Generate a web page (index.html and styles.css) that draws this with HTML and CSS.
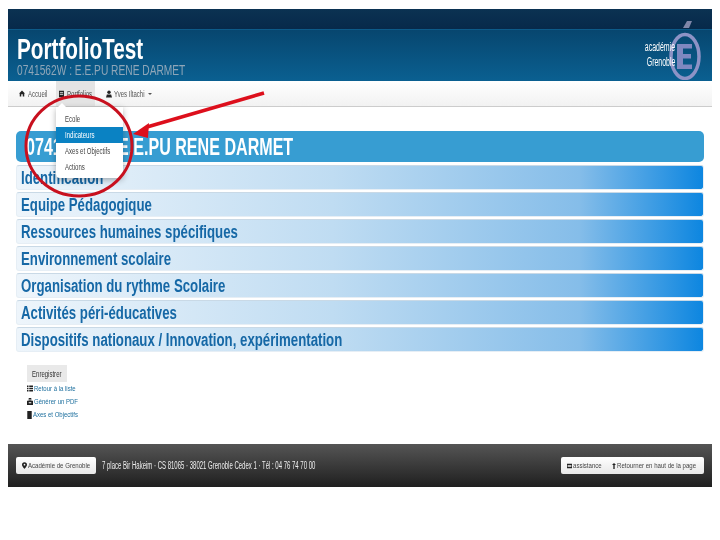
FILE: index.html
```html
<!DOCTYPE html>
<html lang="fr">
<head>
<meta charset="utf-8">
<title>PortfolioTest</title>
<link rel="stylesheet" href="styles.css">
</head>
<body>
<div class="page">
  <div class="topbar"></div>
  <header class="header">
    <div class="brand">
      <div class="brand-title"><span class="squeeze sq-title">PortfolioTest</span></div>
      <div class="brand-sub"><span class="squeeze sq-sub">0741562W : E.E.PU RENE DARMET</span></div>
    </div>
    <div class="logo">
      <div class="logo-text"><span class="squeeze-r">académie</span><span class="squeeze-r">Grenoble</span></div>
      <svg class="logo-mark" width="32" height="62" viewBox="0 0 32 62">
        <polygon points="14,10 18,3 23,3 20,10" fill="#7f86a8"/>
        <ellipse cx="16" cy="38.500" rx="14" ry="22" fill="none" stroke="#8d93c6" stroke-width="3.500"/>
        <path d="M8 26H23V30.500H14V36H22V40.500H14V46.500H23V51H8Z" fill="#7f88c0"/>
      </svg>
    </div>
  </header>
  <nav class="nav">
    <a class="nav-item nav-home">
      <svg class="ico" width="6" height="7" viewBox="0 0 8 8"><path d="M4 0 8 4H7V8H5V5H3V8H1V4H0Z" fill="#222"/></svg>
      <span class="squeeze sq-nav">Accueil</span>
    </a>
    <a class="nav-item nav-active">
      <svg class="ico" width="5" height="8" viewBox="0 0 6 8"><path d="M0 0H6V8H0ZM1 2V3H5V2ZM1 4V5H5V4Z" fill="#222"/></svg>
      <span class="squeeze sq-nav">Portfolios</span>
    </a>
    <a class="nav-item nav-user">
      <svg class="ico" width="6" height="8" viewBox="0 0 7 8"><circle cx="3.500" cy="2" r="2" fill="#222"/><path d="M0 8 1 4.500H6L7 8Z" fill="#222"/></svg>
      <span class="squeeze sq-nav">Yves Iltachi</span>
      <span class="caret"></span>
    </a>
    <div class="menu">
      <span class="menu-tip"></span>
      <a class="menu-item"><span class="squeeze sq-nav">Ecole</span></a>
      <a class="menu-item menu-on"><span class="squeeze sq-nav">Indicateurs</span></a>
      <a class="menu-item"><span class="squeeze sq-nav">Axes et Objectifs</span></a>
      <a class="menu-item"><span class="squeeze sq-nav">Actions</span></a>
    </div>
  </nav>
  <main class="main">
    <h1 class="title"><span class="squeeze sq-h1">0741562W : E.E.PU RENE DARMET</span></h1>
    <ul class="rows">
      <li class="row"><span class="squeeze sq-row">Identification</span></li>
      <li class="row"><span class="squeeze sq-row">Equipe Pédagogique</span></li>
      <li class="row"><span class="squeeze sq-row">Ressources humaines spécifiques</span></li>
      <li class="row"><span class="squeeze sq-row">Environnement scolaire</span></li>
      <li class="row"><span class="squeeze sq-row">Organisation du rythme Scolaire</span></li>
      <li class="row"><span class="squeeze sq-row">Activités péri-éducatives</span></li>
      <li class="row"><span class="squeeze sq-row">Dispositifs nationaux / Innovation, expérimentation</span></li>
    </ul>
    <div class="actions">
      <button class="save"><span class="squeeze sq-nav">Enregistrer</span></button>
      <a class="link">
        <svg class="ico" width="6" height="7" viewBox="0 0 8 8"><path d="M0 0H2V2H0ZM3 0H8V2H3ZM0 3H2V5H0ZM3 3H8V5H3ZM0 6H2V8H0ZM3 6H8V8H3Z" fill="#222"/></svg>
        <span class="squeeze sq-link">Retour à la liste</span>
      </a>
      <a class="link">
        <svg class="ico" width="6" height="7" viewBox="0 0 7 8"><path d="M2 0H5V3H7V8H0V3H2ZM3 1V3H4V1ZM2 5V6H5V5Z" fill="#222"/></svg>
        <span class="squeeze sq-link">Générer un PDF</span>
      </a>
      <a class="link">
        <svg class="ico" width="5" height="8" viewBox="0 0 5 9"><path d="M0 0H5V9H0Z" fill="#222"/></svg>
        <span class="squeeze sq-link">Axes et Objectifs</span>
      </a>
    </div>
  </main>
  <footer class="footer">
    <a class="foot-btn">
      <svg class="ico" width="5" height="7" viewBox="0 0 6 8"><path fill-rule="evenodd" d="M3 0C5 0 6 1.500 6 3 6 5 3 8 3 8S0 5 0 3C0 1.500 1 0 3 0ZM3 2A1 1 0 1 0 3 4 1 1 0 1 0 3 2Z" fill="#222"/></svg>
      <span class="squeeze sq-foot">Académie de Grenoble</span>
    </a>
    <span class="address"><span class="squeeze sq-addr">7 place Bir Hakeim · CS 81065 · 38021 Grenoble Cedex 1 · Tél : 04 76 74 70 00</span></span>
    <div class="foot-right">
      <svg class="ico" width="5" height="6" viewBox="0 0 8 7"><path d="M0 0H8V7H0ZM1 2V3H7V2ZM1 4V5H7V4Z" fill="#222"/></svg>
      <span class="squeeze sq-foot sq-assist">assistance</span>
      <svg class="ico" width="4" height="8" viewBox="0 0 6 9"><path d="M3 0 6 3H4V9H2V3H0Z" fill="#222"/></svg>
      <span class="squeeze sq-foot">Retourner en haut de la page</span>
    </div>
  </footer>
</div>
<svg class="annot" width="720" height="540" viewBox="0 0 720 540">
  <ellipse cx="79" cy="146" rx="53" ry="50" fill="none" stroke="#c8101e" stroke-width="3"/>
  <path d="M264 93 147 127" stroke="#dd0f1c" stroke-width="3.500" fill="none"/>
  <path d="M133 134 149 123 148 138Z" fill="#dd0f1c"/>
</svg>
</body>
</html>
```
FILE: styles.css
```css
html, body { margin: 0; padding: 0; background: #fff; }
body { font-family: "Liberation Sans", Arial, sans-serif; color: #222; }
.page { position: relative; width: 704px; margin: 9px 8px 0; }
.squeeze { display: inline-block; transform-origin: left center; white-space: nowrap; }
.topbar { height: 20px; background: linear-gradient(#0b3252, #07294a); }
.header { height: 52px; display: flex; justify-content: space-between; background: linear-gradient(#07466f, #0a6091); border-top: 1px solid #0d5a88; box-sizing: border-box; }
.brand { padding: 4px 0 0 9px; }
.brand-title { font-size: 30px; line-height: 29px; font-weight: bold; color: #fff; height: 28px; }
.sq-title { transform: scaleX(.69); }
.brand-sub { font-size: 15px; line-height: 16px; color: #8fa6b8; }
.sq-sub { transform: scaleX(.68); }
.logo { display: flex; align-items: flex-start; height: 52px; padding-right: 11px; }
.logo-text { display: flex; flex-direction: column; align-items: flex-end; padding-top: 10px; margin-right: -6px; color: #fff; font-size: 12px; line-height: 15px; }
.squeeze-r { display: inline-block; transform: scaleX(.58); transform-origin: right center; white-space: nowrap; }
.logo-mark { margin-top: -12px; }
.nav { position: relative; height: 26px; display: flex; background: linear-gradient(#fff, #f2f2f2); border-bottom: 1px solid #ccc; box-sizing: border-box; padding-left: 11px; }
.nav-item { display: flex; align-items: center; gap: 3px; box-sizing: border-box; font-size: 9px; color: #555; }
.nav-home { width: 37px; }
.nav-active { width: 39px; padding-left: 3px; background: #e4e4e4; color: #444; }
.nav-user { padding-left: 11px; gap: 2px; }
.nav-user .squeeze { width: 32px; }
.ico { flex: none; }
.sq-nav { transform: scaleX(.67); filter: blur(.3px); }
.caret { border: 2px solid transparent; border-top-color: #555; border-bottom: 0; }
.menu { position: absolute; left: 48px; top: 26px; width: 67px; background: #fff; border-radius: 0 0 4px 4px; box-shadow: 0 2px 6px rgba(0,0,0,.3); padding: 4px 0 3px; z-index: 2; }
.menu-tip { position: absolute; left: 2px; top: -4px; border: 4px solid transparent; border-top: 0; border-bottom-color: #fff; }
.menu-item { display: block; height: 16px; line-height: 16px; padding-left: 9px; font-size: 9px; color: #444; }
.menu-on { background: #0a82c3; color: #fff; }
.main { padding: 24px 0 0; }
.title { margin: 0 8px 3px; height: 31px; background: #379dd2; border-radius: 5px; font-size: 24px; line-height: 31px; color: #fff; font-weight: bold; padding-left: 10px; }
.sq-h1 { transform: scaleX(.67); }
.rows { list-style: none; margin: 0; padding: 0 8px; display: flex; flex-direction: column; gap: 2px; }
.row { height: 25px; line-height: 25px; box-sizing: border-box; padding-left: 4px; font-size: 18px; font-weight: bold; color: #1668a6; border: 1px solid #e6eef5; border-top-color: #c9d9e6; border-radius: 3px; background: linear-gradient(90deg, #eef5fb 0%, #bfdcf2 46%, #85bde9 82%, #0d86e0 100%); }
.sq-row { transform: scaleX(.735); }
.actions { display: flex; flex-direction: column; align-items: flex-start; padding: 13px 0 0 19px; height: 92px; box-sizing: border-box; }
.save { width: 40px; height: 17px; padding: 0 0 0 5px; border: 0; background: #e9e9e9; font: 9px "Liberation Sans", sans-serif; color: #333; text-align: left; flex: none; }
.link { display: flex; align-items: center; gap: 1px; height: 13px; font-size: 8px; color: #1d6f9e; }
.sq-link { transform: scaleX(.75); filter: blur(.3px); }
.footer { height: 43px; display: flex; align-items: center; padding: 0 8px; background: linear-gradient(#555, #1f1f1f); }
.foot-btn, .foot-right { display: flex; align-items: center; gap: 1px; height: 17px; background: linear-gradient(#fff, #e8e8e8); border-radius: 2px; font-size: 8px; color: #444; box-sizing: border-box; padding-left: 6px; }
.foot-btn { width: 80px; }
.foot-right { width: 143px; margin-left: auto; }
.sq-foot { transform: scaleX(.76); filter: blur(.3px); }
.sq-assist { width: 38px; }
.address { margin-left: 6px; font-size: 10px; color: #eee; }
.sq-addr { transform: scaleX(.6); filter: blur(.3px); }
.annot { position: absolute; left: 0; top: 0; pointer-events: none; z-index: 3; }
```
